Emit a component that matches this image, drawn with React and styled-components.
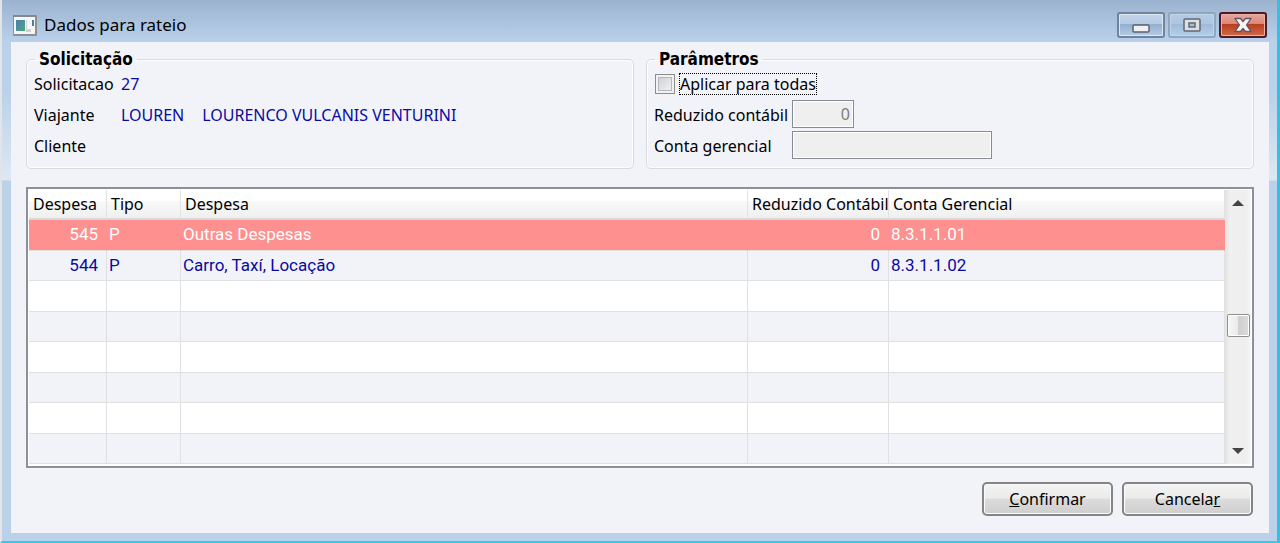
import React, { useState } from 'react'
import styled, { createGlobalStyle, css } from 'styled-components'

const expenses = [
  { id: 545, type: 'P', name: 'Outras Despesas', reduced: 0, account: '8.3.1.1.01' },
  { id: 544, type: 'P', name: 'Carro, Taxí, Locação', reduced: 0, account: '8.3.1.1.02' },
]
const emptyRows = [1, 2, 3, 4, 5, 6]

const App = () => {
  const [selected, setSelected] = useState(545)
  const [applyAll, setApplyAll] = useState(false)

  return (
    <>
      <GlobalStyle />
      <Window>
        <TitleBar>
          <WindowIcon />
          <Title>Dados para rateio</Title>
          <WindowControls>
            <ControlButton aria-label="Minimizar">
              <MinimizeGlyph />
            </ControlButton>
            <ControlButton aria-label="Maximizar" $dimmed>
              <MaximizeGlyph />
            </ControlButton>
            <ControlButton aria-label="Fechar" $danger>
              <CloseGlyph />
            </ControlButton>
          </WindowControls>
        </TitleBar>
        <Client>
          <Groups>
            <Group>
              <Legend>Solicitação</Legend>
              <RequestGrid>
                <dt>Solicitacao</dt>
                <dd>27</dd>
                <dt>Viajante</dt>
                <dd>
                  <span>LOUREN</span>
                  <span>LOURENCO VULCANIS VENTURINI</span>
                </dd>
                <dt>Cliente</dt>
                <dd />
              </RequestGrid>
            </Group>
            <Group>
              <Legend>Parâmetros</Legend>
              <Fields>
                <CheckField>
                  <Checkbox
                    id="applyAll"
                    checked={applyAll}
                    onChange={(e) => setApplyAll(e.target.checked)}
                  />
                  <CheckLabel htmlFor="applyAll">Aplicar para todas</CheckLabel>
                </CheckField>
                <Field>
                  <label htmlFor="reduced">Reduzido contábil</label>
                  <TextInput id="reduced" defaultValue="0" disabled $width={62} $right />
                </Field>
                <Field>
                  <label htmlFor="account">Conta gerencial</label>
                  <TextInput id="account" disabled $width={200} />
                </Field>
              </Fields>
            </Group>
          </Groups>
          <Grid>
            <Table>
              <colgroup>
                <Col $width={78} />
                <Col $width={74} />
                <Col />
                <Col $width={141} />
                <Col $width={336} />
              </colgroup>
              <thead>
                <tr>
                  <HeaderCell>Despesa</HeaderCell>
                  <HeaderCell>Tipo</HeaderCell>
                  <HeaderCell>Despesa</HeaderCell>
                  <HeaderCell>Reduzido Contábil</HeaderCell>
                  <HeaderCell>Conta Gerencial</HeaderCell>
                </tr>
              </thead>
              <tbody>
                {expenses.map((item) => (
                  <Row
                    key={item.id}
                    $selected={item.id === selected}
                    onClick={() => setSelected(item.id)}
                  >
                    <Cell $right>{item.id}</Cell>
                    <Cell>{item.type}</Cell>
                    <Cell>{item.name}</Cell>
                    <Cell $right>{item.reduced}</Cell>
                    <Cell>{item.account}</Cell>
                  </Row>
                ))}
                {emptyRows.map((key) => (
                  <Row key={key}>
                    <Cell />
                    <Cell />
                    <Cell />
                    <Cell />
                    <Cell />
                  </Row>
                ))}
              </tbody>
            </Table>
            <ScrollBar>
              <ScrollButton aria-label="Rolar para cima">
                <Arrow />
              </ScrollButton>
              <ScrollThumb />
              <ScrollButton aria-label="Rolar para baixo">
                <Arrow $down />
              </ScrollButton>
            </ScrollBar>
          </Grid>
          <Actions>
            <Button>
              <u>C</u>onfirmar
            </Button>
            <Button>
              Cancela<u>r</u>
            </Button>
          </Actions>
        </Client>
      </Window>
    </>
  )
}

const WindowIcon = () => (
  <svg width="24" height="21" viewBox="0 0 24 21" aria-hidden="true">
    <defs>
      <linearGradient id="screen" x1="0" y1="0" x2="1" y2="1">
        <stop offset="0" stopColor="#4a7fb0" />
        <stop offset="1" stopColor="#4fa37c" />
      </linearGradient>
    </defs>
    <rect x="0" y="0" width="24" height="21" rx="1" fill="#8f8f92" />
    <rect x="1" y="2" width="21" height="17" fill="#f4f5f5" />
    <rect x="0" y="0" width="23" height="2" fill="#85888f" />
    <rect x="3" y="5" width="9" height="11" fill="url(#screen)" />
    <rect x="13" y="5" width="1" height="11" fill="#c9d4dc" />
    <rect x="19" y="5" width="2" height="6" fill="#4c7f9c" />
    <rect x="13" y="14" width="5" height="3" fill="#cfd1d3" />
  </svg>
)

const MinimizeGlyph = () => (
  <svg width="18" height="22" viewBox="0 0 18 22" aria-hidden="true">
    <rect x="1" y="11" width="16" height="7" rx="1" fill="#f0f0f0" stroke="#5a6270" strokeWidth="1.5" />
  </svg>
)

const MaximizeGlyph = () => (
  <svg width="18" height="22" viewBox="0 0 18 22" aria-hidden="true">
    <rect x="1" y="5" width="16" height="12" rx="1" fill="#dedfe1" stroke="#5f6878" strokeWidth="1.5" />
    <rect x="6" y="9" width="6" height="4" fill="#a9c0da" stroke="#5f6878" strokeWidth="1.5" />
  </svg>
)

const CloseGlyph = () => (
  <svg width="18" height="22" viewBox="0 0 18 22" aria-hidden="true">
    <path
      d="M1 4.500h5.500L9 7.500l2.500-3H17l-4.500 6.500 4.500 6.500h-5.500L9 14.500l-2.500 3H1l4.500-6.500z"
      fill="#f4f4f4"
      stroke="#5d5563"
      strokeWidth="1.300"
      strokeLinejoin="round"
    />
  </svg>
)

const GlobalStyle = createGlobalStyle`
  * {
    box-sizing: border-box;
  }

  body {
    margin: 0;
    background: #b9d1ea;
    color: #000;
    font: 16px/20px 'Noto Sans', 'Open Sans', sans-serif;
  }
`

const Window = styled.div`
  display: flex;
  flex-direction: column;
  min-height: 100vh;
  padding: 0 8px 8px 9px;
  border: solid;
  border-width: 0 3px 2px 2px;
  border-color: transparent #35bfe0 #22d3f0 #e4e4e4;
  background: linear-gradient(
    #9bb3cf 0,
    #b9d1ea 42px,
    #b9d1ea 90px,
    #dde8f3 180px,
    #bbd0e9 181px
  );
`

const TitleBar = styled.header`
  display: flex;
  align-items: center;
  gap: 7px;
  height: 42px;
  padding: 8px 2px 0;
`

const Title = styled.h1`
  flex: 1;
  margin: 0;
  font-size: 17px;
  font-weight: 400;
`

const WindowControls = styled.div`
  display: flex;
  gap: 3px;
`

const ControlButton = styled.button`
  display: flex;
  align-items: center;
  justify-content: center;
  width: 48px;
  height: 26px;
  padding: 0;
  border: 2px solid #6f839d;
  border-radius: 3px;
  background: linear-gradient(#c3d5e9 0, #b6cbe3 45%, #93afce 46%, #b3cce6 100%);
  box-shadow: inset 0 0 0 1px #dce8f4;

  ${(props) =>
    props.$dimmed &&
    css`
      border-color: #8fa6c1;
      background: linear-gradient(#b5cbe3 0, #adc5df 45%, #9fbad8 46%, #b5cee9 100%);
      box-shadow: inset 0 0 0 1px #c3d6ea;
    `}

  ${(props) =>
    props.$danger &&
    css`
      border-color: #4f1a26;
      background: linear-gradient(#e6a89d 0, #da8676 45%, #b83d20 46%, #cf6a45 100%);
      box-shadow: inset 0 0 0 1px #e9b1a5;
    `}
`

const Client = styled.main`
  flex: 1;
  padding: 7px 15px 16px;
  background: #f2f3f9;
`

const Groups = styled.div`
  display: grid;
  grid-template-columns: 1fr 1fr;
  gap: 12px;
`

const Group = styled.fieldset`
  min-width: 0;
  height: 120px;
  margin: 0;
  padding: 0 6px;
  border: 1px solid #d9dade;
  border-radius: 5px;
  box-shadow: inset 0 0 0 1px #fcfcfe;
`

const Legend = styled.legend`
  margin-left: 2px;
  padding: 0 4px;
  font: bold 17px/20px 'DejaVu Sans Condensed', 'Noto Sans', sans-serif;
`

const RequestGrid = styled.dl`
  display: grid;
  grid-template-columns: 87px 1fr;
  grid-auto-rows: 30px;
  row-gap: 1px;
  margin: 0;
  padding-left: 1px;
  line-height: 30px;

  dd {
    display: flex;
    gap: 18px;
    margin: 0;
    color: #0a0aa0;
  }
`

const Fields = styled.div`
  display: grid;
  grid-auto-rows: 30px;
  row-gap: 1px;
  padding-left: 1px;
`

const Field = styled.div`
  display: grid;
  grid-template-columns: 138px 1fr;
  line-height: 30px;
  white-space: nowrap;
`

const CheckField = styled.div`
  display: flex;
  align-items: center;
  gap: 4px;
`

const Checkbox = styled.input.attrs({ type: 'checkbox' })`
  appearance: none;
  width: 20px;
  height: 20px;
  margin: 0 0 0 1px;
  border: 1px solid #8c8c8c;
  background: linear-gradient(135deg, #c6cbd2, #f8f8f8);
  box-shadow: inset 0 0 0 2px #f2f2f2, inset 0 0 0 3px #b4b8be;

  &:checked {
    background: #4a5f97;
  }
`

const CheckLabel = styled.label`
  height: 22px;
  border: 1px dotted #000;
  line-height: 20px;
`

const TextInput = styled.input`
  width: ${(props) => props.$width}px;
  height: 28px;
  padding: 0 3px;
  border: 1px solid #858b96;
  background: #efefef;
  box-shadow: inset 0 0 0 1px #fff;
  color: #7c7c7c;
  font: inherit;
  text-align: ${(props) => (props.$right ? 'right' : 'left')};
`

const Grid = styled.section`
  display: flex;
  margin-top: 18px;
  padding: 1px 1px 2px;
  border: 2px solid #8b9099;
  background: #fff;
`

const Table = styled.table`
  flex: 1;
  table-layout: fixed;
  width: 100%;
  border-collapse: separate;
  border-spacing: 0;
`

const Col = styled.col`
  width: ${(props) => (props.$width ? `${props.$width}px` : 'auto')};
`

const HeaderCell = styled.th`
  height: 30px;
  padding: 0 4px;
  border-right: 1px solid #e2e2e2;
  border-bottom: 2px solid #d9d9d9;
  background: linear-gradient(#fff 0, #fff 40%, #f8f8f8 41%, #f0f0f0 100%);
  font-weight: 400;
  text-align: left;
  white-space: nowrap;
`

const Row = styled.tr`
  height: 31px;
  background: #fff;
  color: #0a0aa0;

  &:nth-child(even) {
    height: 30px;
    background: #f2f3f9;
  }

  ${(props) =>
    props.$selected &&
    css`
      && {
        background: #ff9090;
        color: #fff;
      }

      && > td {
        border-right-color: #ff9090;
      }
    `}
`

const Cell = styled.td`
  padding: 0 8px 2px 2px;
  border-right: 1px solid #e0e0e0;
  border-bottom: 1px solid #e0e0e0;
  font: 17px/20px Roboto, 'Noto Sans', sans-serif;
  text-align: ${(props) => (props.$right ? 'right' : 'left')};
  white-space: nowrap;
`

const ScrollBar = styled.div`
  display: grid;
  grid-template-rows: 26px 1fr 26px;
  align-items: center;
  justify-items: center;
  width: 26px;
  background: linear-gradient(90deg, #e3e3e3, #f0f0f0 20%, #eee 80%, #f6f6f6);
`

const ScrollButton = styled.button`
  display: flex;
  align-items: center;
  justify-content: center;
  width: 24px;
  height: 26px;
  padding: 0;
  border: 0;
  background: none;
`

const Arrow = styled.span`
  border: 6px solid transparent;
  border-top-width: ${(props) => (props.$down ? 6 : 0)}px;
  border-bottom-width: ${(props) => (props.$down ? 0 : 6)}px;
  border-top-color: #444;
  border-bottom-color: #444;
`

const ScrollThumb = styled.div`
  width: 23px;
  height: 23px;
  margin-bottom: 4px;
  border: 1px solid #8e8e8e;
  border-radius: 2px;
  background: linear-gradient(90deg, #f6f6f6 0, #ebebeb 45%, #cfcfcf 50%, #dcdcdc 100%);
  box-shadow: inset 0 0 0 1px #fff;
`

const Actions = styled.footer`
  display: flex;
  justify-content: flex-end;
  gap: 9px;
  margin-top: 14px;
  padding-right: 1px;
`

const Button = styled.button`
  width: 131px;
  height: 34px;
  padding: 0;
  border: 2px solid #858585;
  border-radius: 5px;
  background: linear-gradient(#f3f3f3 0, #ebebeb 48%, #dcdcdc 49%, #cecece 100%);
  box-shadow: inset 0 0 0 1px #fafafa;
  color: #000;
  font: inherit;
`

export default App
